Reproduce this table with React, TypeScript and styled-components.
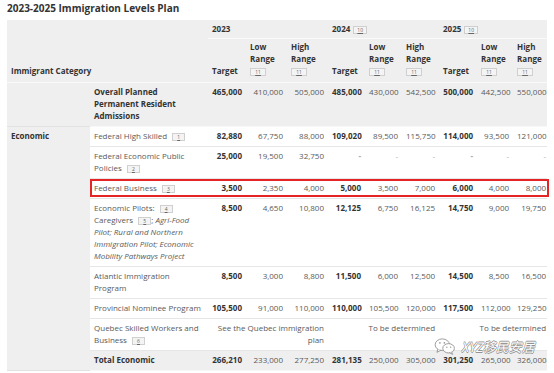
import { Fragment } from "react";
import styled, { createGlobalStyle } from "styled-components";

const GlobalStyle = createGlobalStyle`
  body {
    margin: 0;
    background: #fff;
    font-family: "Open Sans", "Noto Sans", sans-serif;
  }
`;

const COLS = [83, 118, 38, 41, 41, 37, 37, 37, 38, 36, 34];

type Row = {
  label: React.ReactNode;
  values: string[];
};

const ROWS: Row[] = [
  {
    label: (
      <>
        Federal High Skilled <Ref>1</Ref>
      </>
    ),
    values: ["82,880", "67,750", "88,000", "109,020", "89,500", "115,750", "114,000", "93,500", "121,000"],
  },
  {
    label: (
      <>
        Federal Economic Public Policies <Ref>2</Ref>
      </>
    ),
    values: ["25,000", "19,500", "32,750", "-", "-", "-", "-", "-", "-"],
  },
  {
    label: (
      <>
        Federal Business <Ref>3</Ref>
      </>
    ),
    values: ["3,500", "2,350", "4,000", "5,000", "3,500", "7,000", "6,000", "4,000", "8,000"],
  },
  {
    label: (
      <>
        Economic Pilots: <Ref>4</Ref> Caregivers <Ref>5</Ref>;{" "}
        <em>Agri-Food Pilot; Rural and Northern Immigration Pilot; Economic Mobility Pathways Project</em>
      </>
    ),
    values: ["8,500", "4,650", "10,800", "12,125", "6,750", "16,125", "14,750", "9,000", "19,750"],
  },
  {
    label: "Atlantic Immigration Program",
    values: ["8,500", "3,000", "8,800", "11,500", "6,000", "12,500", "14,500", "8,500", "16,500"],
  },
  {
    label: "Provincial Nominee Program",
    values: ["105,500", "91,000", "110,000", "110,000", "105,500", "120,000", "117,500", "112,000", "129,250"],
  },
];

const OVERALL = ["465,000", "410,000", "505,000", "485,000", "430,000", "542,500", "500,000", "442,500", "550,000"];
const TOTAL = ["266,210", "233,000", "277,250", "281,135", "250,000", "305,000", "301,250", "265,000", "326,000"];

const isTarget = (i: number) => i % 3 === 0;

const App = () => {
  return (
    <>
      <GlobalStyle />
      <Page>
        <Title>2023-2025 Immigration Levels Plan</Title>
        <TableWrap>
          <Table>
            <colgroup>
              {COLS.map((w, i) => (
                <col key={i} style={{ width: w }} />
              ))}
            </colgroup>
            <thead>
              <tr>
                <HeadCell colSpan={2} rowSpan={2}>
                  Immigrant Category
                </HeadCell>
                {["2023", "2024", "2025"].map((year, i) => (
                  <YearCell key={year} colSpan={3}>
                    {year}
                    {i > 0 && <Ref>10</Ref>}
                  </YearCell>
                ))}
              </tr>
              <tr>
                {[0, 1, 2].map((y) => (
                  <Fragment key={y}>
                    <HeadCell>Target</HeadCell>
                    <HeadCell>
                      Low
                      <br />
                      Range
                      <br />
                      <Ref>11</Ref>
                    </HeadCell>
                    <HeadCell $last={y === 2}>
                      High
                      <br />
                      Range
                      <br />
                      <Ref>11</Ref>
                    </HeadCell>
                  </Fragment>
                ))}
              </tr>
            </thead>
            <tbody>
              <tr>
                <CategoryCell />
                <LabelCell $shade $bold>
                  Overall Planned Permanent Resident Admissions
                </LabelCell>
                {OVERALL.map((v, i) => (
                  <NumCell key={i} $shade $bold={isTarget(i)} $last={i === 8}>
                    {v}
                  </NumCell>
                ))}
              </tr>
              {ROWS.map((row, r) => (
                <tr key={r}>
                  {r === 0 && <CategoryCell rowSpan={ROWS.length + 2}>Economic</CategoryCell>}
                  <LabelCell>{row.label}</LabelCell>
                  {row.values.map((v, i) => (
                    <NumCell key={i} $bold={isTarget(i)} $dash={v === "-"} $last={i === 8}>
                      {v}
                    </NumCell>
                  ))}
                </tr>
              ))}
              <tr>
                <LabelCell>
                  Quebec Skilled Workers and Business <Ref>6</Ref>
                </LabelCell>
                <SpanCell colSpan={3}>See the Quebec immigration plan</SpanCell>
                <SpanCell colSpan={3}>To be determined</SpanCell>
                <SpanCell colSpan={3} $last>
                  To be determined
                </SpanCell>
              </tr>
              <tr>
                <LabelCell $shade $bold>
                  Total Economic
                </LabelCell>
                {TOTAL.map((v, i) => (
                  <NumCell key={i} $shade $bold={isTarget(i)} $last={i === 8}>
                    {v}
                  </NumCell>
                ))}
              </tr>
            </tbody>
          </Table>
          <Callout />
          <Watermark>
            <svg width="22" height="17" viewBox="0 0 24 19">
              <ellipse cx="9" cy="7.5" rx="8" ry="6.5" fill="#fff" stroke="#888" strokeWidth="1" />
              <path d="M4 12.5 L3 16 L7.5 13.6" fill="#fff" stroke="#888" strokeWidth="1" />
              <ellipse cx="16" cy="11.5" rx="6.5" ry="5.2" fill="#fff" stroke="#888" strokeWidth="1" />
              <path d="M19.5 15.8 L20.5 18.3 L17 16.5" fill="#fff" stroke="#888" strokeWidth="1" />
              <circle cx="6.3" cy="5.5" r="0.9" fill="#888" />
              <circle cx="11.3" cy="5.5" r="0.9" fill="#888" />
              <circle cx="14" cy="10.2" r="0.8" fill="#888" />
              <circle cx="18.3" cy="10.2" r="0.8" fill="#888" />
            </svg>
            <WatermarkText>XYZ移民安居</WatermarkText>
          </Watermark>
        </TableWrap>
      </Page>
    </>
  );
};

export default App;

function Ref({ children }: { children: React.ReactNode }) {
  return <RefBadge>{children}</RefBadge>;
}

const Page = styled.div`
  padding: 0 7px;
  width: 540px;
`;

const Title = styled.h2`
  margin: 0;
  height: 20px;
  font-size: 10px;
  line-height: 16px;
  font-weight: 700;
  color: #333;
`;

const TableWrap = styled.div`
  position: relative;
`;

const Table = styled.table`
  border-collapse: collapse;
  table-layout: fixed;
  width: 540px;
  font-size: 8px;
  line-height: 12px;
  color: #5a5a5a;
`;

const HeadCell = styled.th<{ $last?: boolean }>`
  background: #efefef;
  color: #333;
  font-weight: 700;
  text-align: left;
  vertical-align: bottom;
  padding: 2px ${(p) => (p.$last ? 1 : 4)}px 5px 4px;
  border-bottom: 1px solid #fafafa;
`;

const YearCell = styled.th`
  background: #efefef;
  color: #333;
  font-weight: 700;
  text-align: left;
  vertical-align: middle;
  padding: 3px 4px;
  border-bottom: 1px solid #fafafa;
`;

const CategoryCell = styled.th`
  background: #efefef;
  color: #333;
  font-weight: 700;
  text-align: left;
  vertical-align: top;
  padding: 3px 4px 4px;
  border-bottom: 1px solid #e2e2e2;
`;

const LabelCell = styled.td<{ $shade?: boolean; $bold?: boolean }>`
  background: ${(p) => (p.$shade ? "#efefef" : "#fff")};
  color: ${(p) => (p.$bold ? "#333" : "#5a5a5a")};
  font-weight: ${(p) => (p.$bold ? 700 : 400)};
  vertical-align: top;
  padding: 3px 4px 4px;
  border-bottom: 1px solid ${(p) => (p.$shade ? "#f7f7f7" : "#e6e6e6")};

  em {
    font-style: italic;
  }
`;

const NumCell = styled.td<{ $shade?: boolean; $bold?: boolean; $dash?: boolean; $last?: boolean }>`
  background: ${(p) => (p.$shade ? "#efefef" : "#fff")};
  color: ${(p) => (p.$dash ? "#aaa" : p.$bold ? "#333" : "#5a5a5a")};
  font-weight: ${(p) => (p.$bold ? 700 : 400)};
  text-align: right;
  vertical-align: top;
  white-space: nowrap;
  padding: 3px ${(p) => (p.$last ? 1 : 4)}px 4px 4px;
  border-bottom: 1px solid ${(p) => (p.$shade ? "#f7f7f7" : "#e6e6e6")};
`;

const SpanCell = styled.td<{ $last?: boolean }>`
  background: #fff;
  color: #5a5a5a;
  text-align: right;
  vertical-align: top;
  padding: 3px ${(p) => (p.$last ? 1 : 4)}px 4px 4px;
  border-bottom: 1px solid #e6e6e6;
`;

const RefBadge = styled.span`
  box-sizing: border-box;
  display: inline-block;
  min-width: 13px;
  height: 8px;
  padding: 0 3px;
  margin-left: 3px;
  font-size: 5px;
  line-height: 6px;
  font-weight: 400;
  text-align: center;
  color: #666;
  text-decoration: underline;
  background: #f4f4f4;
  border: 1px solid #cfcfcf;
  vertical-align: middle;

  br + & {
    margin-left: 0;
    min-width: 16px;
  }
`;

const Callout = styled.div`
  position: absolute;
  left: 83px;
  top: 159px;
  width: 455px;
  height: 14px;
  border: 2px solid #e52525;
  pointer-events: none;
`;

const Watermark = styled.div`
  position: absolute;
  left: 427px;
  top: 318px;
  display: flex;
  align-items: center;
  gap: 5px;
  opacity: 0.9;
`;

const WatermarkText = styled.span`
  font-family: "Noto Sans CJK SC", "Noto Sans", sans-serif;
  font-size: 13px;
  font-style: italic;
  line-height: 16px;
  color: #fff;
  text-shadow: -0.6px 0 #888, 0.6px 0 #888, 0 -0.6px #888, 0 0.6px #888;
`;
